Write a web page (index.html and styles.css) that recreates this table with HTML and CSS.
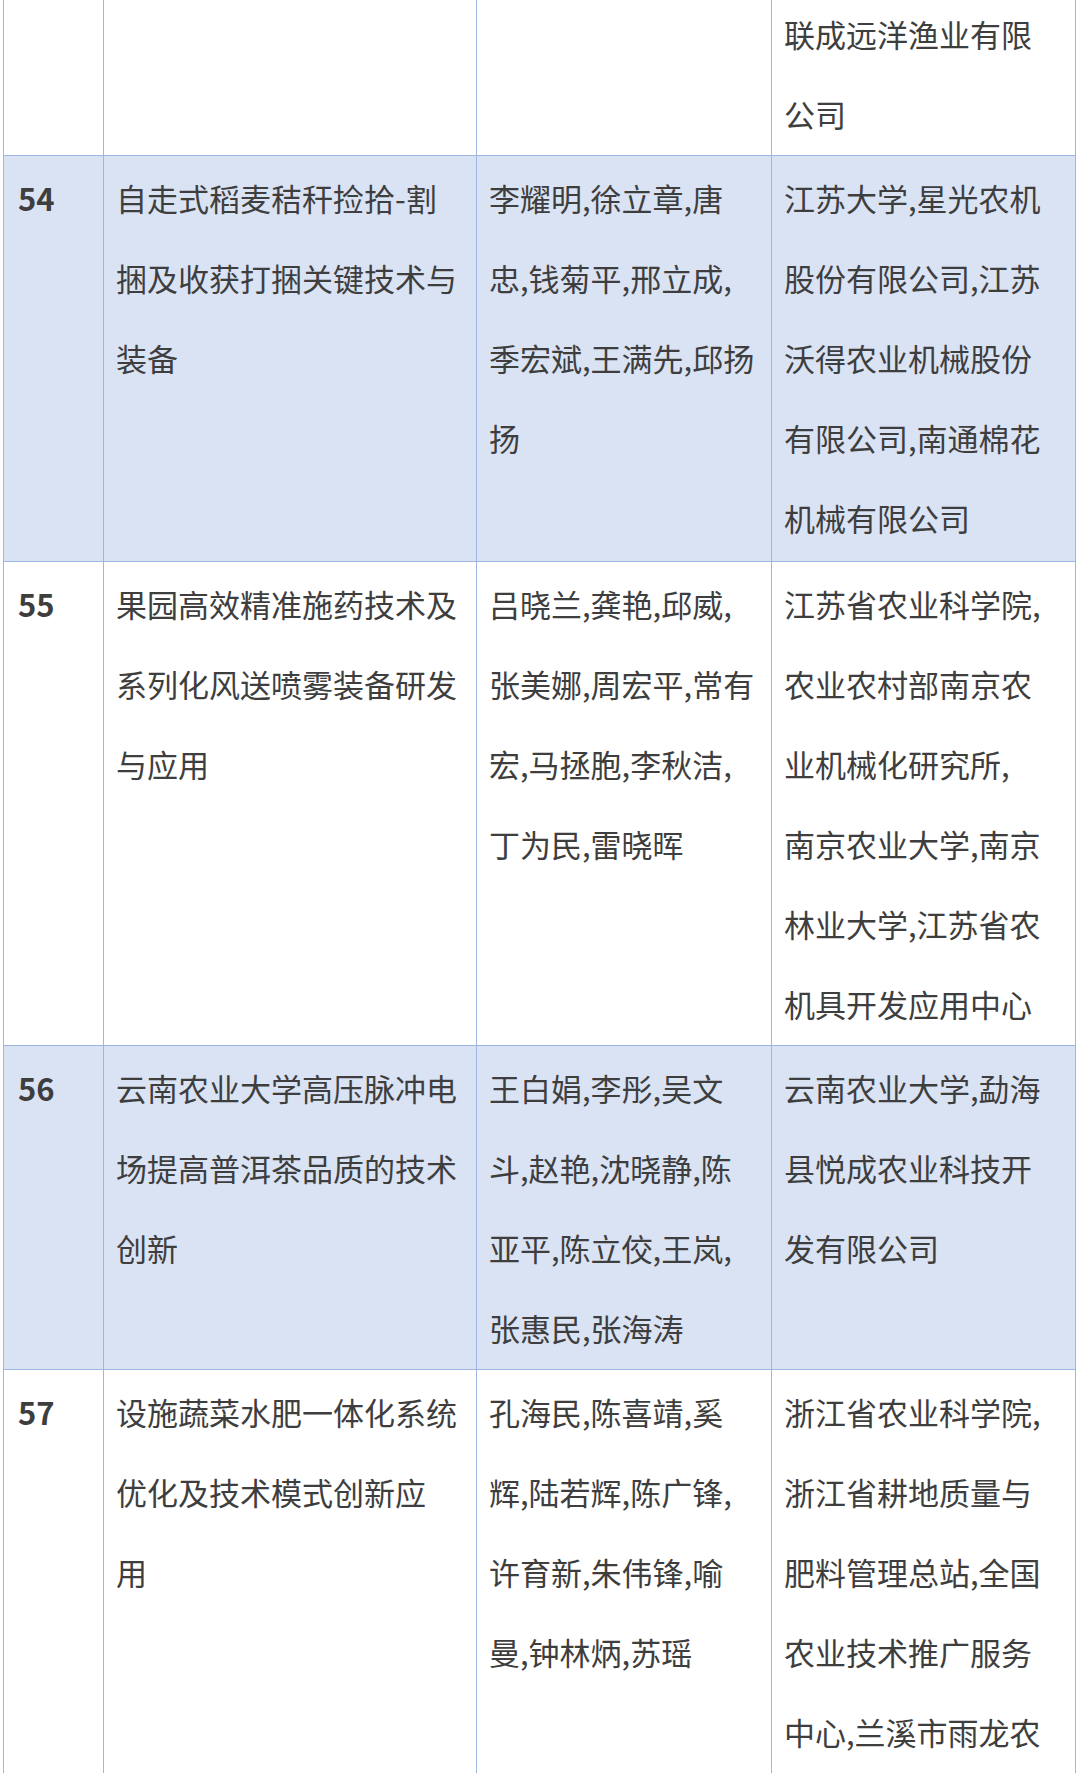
FILE: index.html
```html
<!DOCTYPE html>
<html lang="zh-CN">
<head>
<meta charset="utf-8">
<title>获奖成果名单</title>
<link rel="stylesheet" href="styles.css">
</head>
<body>
<div class="page">
  <div class="award-table">
    <div class="row row-prev">
      <div class="cell num"></div>
      <div class="cell"></div>
      <div class="cell"></div>
      <div class="cell">联成远洋渔业有限<br>公司</div>
    </div>
    <div class="row shaded row-first">
      <div class="cell num">54</div>
      <div class="cell">自走式稻麦秸秆捡拾-割<br>捆及收获打捆关键技术与<br>装备</div>
      <div class="cell">李耀明,徐立章,唐<br>忠,钱菊平,邢立成,<br>季宏斌,王满先,邱扬<br>扬</div>
      <div class="cell">江苏大学,星光农机<br>股份有限公司,江苏<br>沃得农业机械股份<br>有限公司,南通棉花<br>机械有限公司</div>
    </div>
    <div class="row">
      <div class="cell num">55</div>
      <div class="cell">果园高效精准施药技术及<br>系列化风送喷雾装备研发<br>与应用</div>
      <div class="cell">吕晓兰,龚艳,邱威,<br>张美娜,周宏平,常有<br>宏,马拯胞,李秋洁,<br>丁为民,雷晓晖</div>
      <div class="cell">江苏省农业科学院,<br>农业农村部南京农<br>业机械化研究所,<br>南京农业大学,南京<br>林业大学,江苏省农<br>机具开发应用中心</div>
    </div>
    <div class="row shaded">
      <div class="cell num">56</div>
      <div class="cell">云南农业大学高压脉冲电<br>场提高普洱茶品质的技术<br>创新</div>
      <div class="cell">王白娟,李彤,吴文<br>斗,赵艳,沈晓静,陈<br>亚平,陈立佼,王岚,<br>张惠民,张海涛</div>
      <div class="cell">云南农业大学,勐海<br>县悦成农业科技开<br>发有限公司</div>
    </div>
    <div class="row row-last">
      <div class="cell num">57</div>
      <div class="cell">设施蔬菜水肥一体化系统<br>优化及技术模式创新应<br>用</div>
      <div class="cell">孔海民,陈喜靖,奚<br>辉,陆若辉,陈广锋,<br>许育新,朱伟锋,喻<br>曼,钟林炳,苏瑶</div>
      <div class="cell">浙江省农业科学院,<br>浙江省耕地质量与<br>肥料管理总站,全国<br>农业技术推广服务<br>中心,兰溪市雨龙农</div>
    </div>
  </div>
</div>
</body>
</html>
```

FILE: styles.css
```css
html, body {
  margin: 0;
  padding: 0;
  background: #ffffff;
}

.page {
  width: 1080px;
  height: 1773px;
  overflow: hidden;
  padding-left: 3px;
  box-sizing: border-box;
  font-family: "Noto Sans CJK SC", "Noto Sans", sans-serif;
  color: #3e3e3e;
}

.award-table {
  display: flex;
  flex-direction: column;
  width: 1073px;
}

.row {
  display: grid;
  grid-template-columns: 100px 373px 295px 304px;
  border-left: 1px solid #9fb6e2;
  border-bottom: 1px solid #9fb6e2;
  background: #ffffff;
}

.row.shaded {
  background: #dae3f4;
}

.row-prev {
  margin-top: -8px;
}

.row-first .cell {
  padding-bottom: 3px;
}

.row-last {
  border-bottom: none;
}

.row-last .cell {
  padding-bottom: 40px;
}

.cell {
  box-sizing: border-box;
  border-right: 1px solid #9fb6e2;
  padding: 2px 13px 1px 12px;
  font-size: 31px;
  line-height: 80px;
  white-space: nowrap;
}

.cell.num {
  font-weight: 700;
  padding-left: 14px;
}
```
